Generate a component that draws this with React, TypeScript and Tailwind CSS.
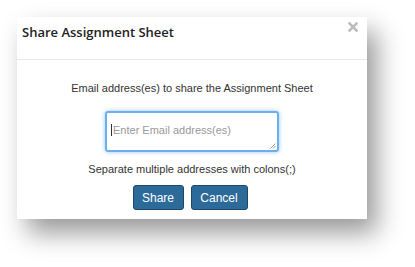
import React from "react";

export default function App() {
  return (
    <div className="w-[415px] h-[267px] bg-white overflow-hidden" style={{ fontFamily: '"Liberation Sans", Arial, sans-serif' }}>
      <div className="ml-[17px] mt-[17px] w-[350px] h-[202px] bg-white shadow-[10px_14px_24px_rgba(0,0,0,0.4)] flex flex-col">
        <div className="h-[43px] border-b border-[#e8e8e8] flex items-start justify-between pl-[5px] pr-[9px] pt-[6px]">
          <h1 className="text-[13px] font-semibold text-[#222] leading-[18px]" style={{ fontFamily: '"Open Sans", sans-serif' }}>
            Share Assignment Sheet
          </h1>
          <svg width="10" height="10" viewBox="0 0 10 10" className="mt-[-1px]">
            <path d="M1.5 1.5 L8.5 8.5 M8.5 1.5 L1.5 8.5" stroke="#bdbdbd" strokeWidth="2.6" strokeLinecap="square" />
          </svg>
        </div>
        <div className="flex flex-col items-center pt-[21px]">
          <p className="text-[11px] leading-[14px] text-[#333]">Email address(es) to share the Assignment Sheet</p>
          <div className="mt-[16px] w-[174px] h-[41px] rounded-[3px] border-2 border-[#6ab0ee] shadow-[0_0_4px_rgba(102,175,233,0.7)] relative px-[4px] pt-[4px]">
            <span className="text-[11px] leading-[14px] text-[#999] border-l border-[#333] pl-[1px]">Enter Email address(es)</span>
            <svg width="6" height="6" viewBox="0 0 6 6" className="absolute right-[1px] bottom-[1px]">
              <path d="M5.5 0.5 L0.5 5.5 M5.5 3 L3 5.5" stroke="#888" strokeWidth="0.8" />
            </svg>
          </div>
          <p className="mt-[10px] text-[11px] leading-[14px] text-[#333]">Separate multiple addresses with colons(;)</p>
          <div className="mt-[9px] flex gap-[7px] mr-[4px]">
            <button className="w-[51px] h-[25px] rounded-[3px] bg-[#2c6a99] border border-[#1e4666] text-white text-[12px]">Share</button>
            <button className="w-[57px] h-[25px] rounded-[3px] bg-[#2c6a99] border border-[#1e4666] text-white text-[12px]">Cancel</button>
          </div>
        </div>
      </div>
    </div>
  );
}
